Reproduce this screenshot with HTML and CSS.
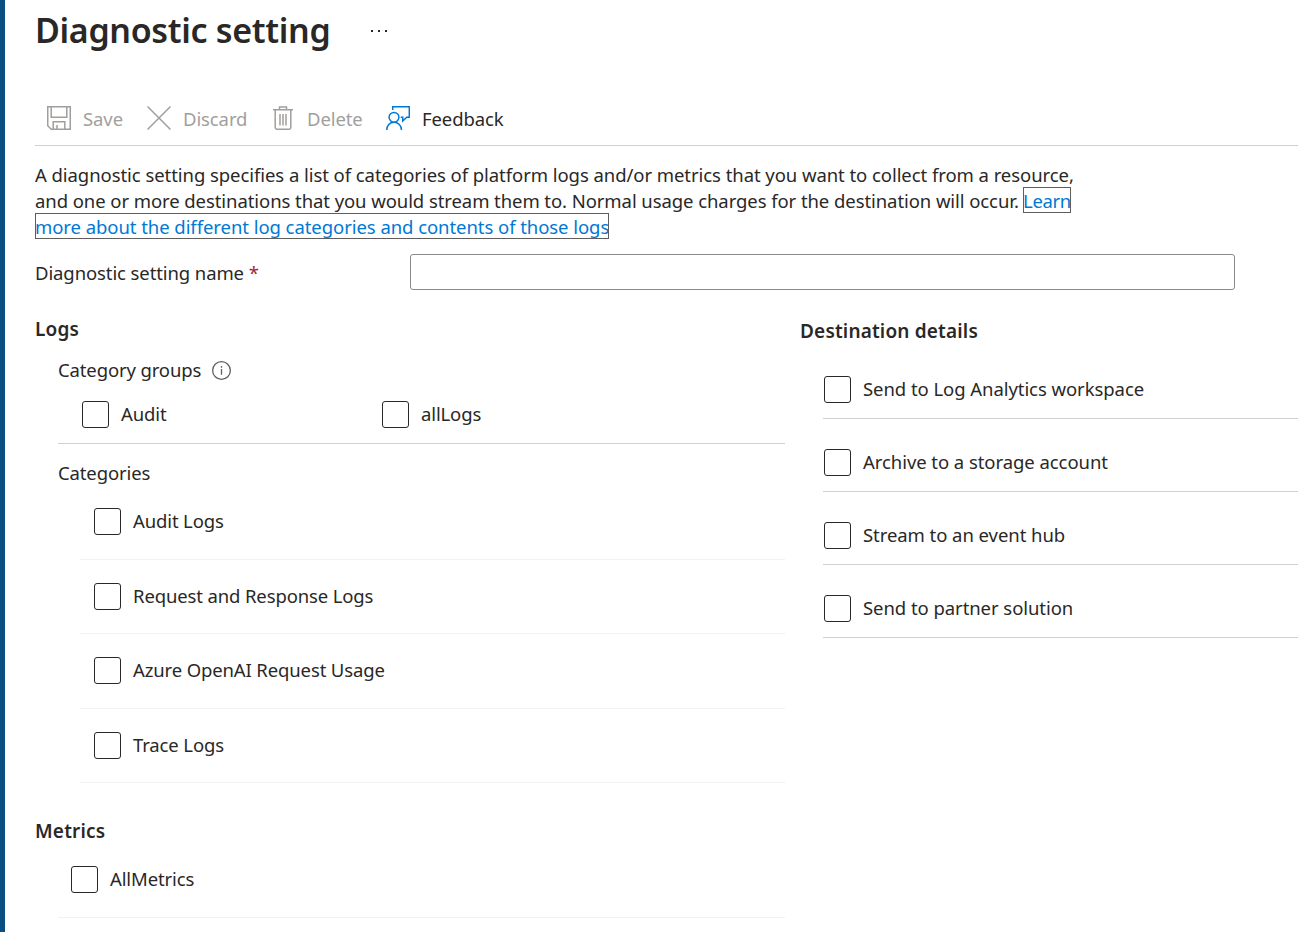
FILE: index.html
```
<!DOCTYPE html>
<html lang="en">
<head>
<meta charset="utf-8">
<title>Diagnostic setting</title>
<link rel="stylesheet" href="styles.css">
</head>
<body>
<main class="blade">
  <header class="header">
    <h1 class="title">Diagnostic setting</h1>
    <svg class="more" viewBox="0 0 18 4"><path d="M1 1h2v2H1zM8 1h2v2H8zM15 1h2v2h-2z"/></svg>
  </header>
  <nav class="toolbar">
    <button class="command save" disabled>
      <svg class="icon" viewBox="0 0 24 24"><path d="M.75.75h22.5v22.5H4.2L.75 19.8zM4.2.75v10.5h15.6V.75M6.2 23.25v-7.5h11.6v7.5M10 23.25V19"/></svg>
      <span>Save</span>
    </button>
    <button class="command discard" disabled>
      <svg class="icon" viewBox="0 0 24 24"><path d="M.5.5l23 23M23.500.5l-23 23"/></svg>
      <span>Discard</span>
    </button>
    <button class="command delete" disabled>
      <svg class="icon" viewBox="0 0 24 24"><path d="M2 3.700h20M8.500 3.500V1h7v2.500M4.200 4v17.500q0 1.700 1.700 1.700h12.200q1.700 0 1.700-1.700V4M9 8v11.500M12 8v11.500M15 8v11.500"/></svg>
      <span>Delete</span>
    </button>
    <button class="command feedback">
      <svg class="icon" viewBox="0 0 24 24"><path d="M6.700 4V.75h16.600v10.500h-2.500l-4.100 3.700v-3.700h-2"/><circle cx="8" cy="11.300" r="4.900"/><path d="M.75 24c0-4.500 3-7.800 7.250-7.800s7.500 3.300 7.500 7.800"/></svg>
      <span>Feedback</span>
    </button>
  </nav>
  <p class="intro"><span class="line-one">A diagnostic setting specifies a list of categories of platform logs and/or metrics that you want to collect from a resource,</span><br><span class="line-two">and one or more destinations that you would stream them to. Normal usage charges for the destination will occur.</span> <a class="link" href="#"><span class="learn">Learn</span><br><span class="line-three">more about the different log categories and contents of those logs</span></a></p>
  <div class="field">
    <label class="field-label" for="name">Diagnostic setting name <span class="required">*</span></label>
    <input class="field-input" id="name" type="text">
  </div>
  <div class="columns">
    <section class="sources">
      <h2 class="heading">Logs</h2>
      <div class="groups">
        <div class="subheading"><span>Category groups</span>
          <svg class="info" viewBox="0 0 18 18"><circle cx="9" cy="9" r="8.400"/><path d="M9 7.500v5.500M9 4.800v1.500"/></svg>
        </div>
        <div class="group-options">
          <label class="option"><input class="box" type="checkbox"><span>Audit</span></label>
          <label class="option"><input class="box" type="checkbox"><span>allLogs</span></label>
        </div>
      </div>
      <div class="subheading categories-title"><span>Categories</span></div>
      <div class="categories">
        <label class="option"><input class="box" type="checkbox"><span>Audit Logs</span></label>
        <label class="option"><input class="box" type="checkbox"><span>Request and Response Logs</span></label>
        <label class="option"><input class="box" type="checkbox"><span>Azure OpenAI Request Usage</span></label>
        <label class="option"><input class="box" type="checkbox"><span>Trace Logs</span></label>
      </div>
      <h2 class="heading metrics-title">Metrics</h2>
      <div class="metrics">
        <label class="option"><input class="box" type="checkbox"><span>AllMetrics</span></label>
      </div>
    </section>
    <section class="destinations">
      <h2 class="heading">Destination details</h2>
      <div class="destination-list">
        <label class="option"><input class="box" type="checkbox"><span>Send to Log Analytics workspace</span></label>
        <label class="option"><input class="box" type="checkbox"><span>Archive to a storage account</span></label>
        <label class="option"><input class="box" type="checkbox"><span>Stream to an event hub</span></label>
        <label class="option"><input class="box" type="checkbox"><span>Send to partner solution</span></label>
      </div>
    </section>
  </div>
</main>
</body>
</html>
```
FILE: styles.css
```
* { box-sizing: border-box; }
body {
  margin: 0;
  background: #fff;
  color: #292827;
  font-family: "Noto Sans", "Open Sans", sans-serif;
  font-size: 18.500px;
  line-height: 26px;
  letter-spacing: -0.06px;
}
.blade {
  height: 932px;
  overflow: hidden;
  border-left: 5px solid #0b4f82;
  padding-left: 30px;
}
.header { display: flex; height: 95px; }
.title { margin: 7px 0 0; width: 335px; font-size: 34px; line-height: 46px; font-weight: 600; letter-spacing: -0.33px; white-space: nowrap; }
.more { width: 18px; height: 4px; margin-top: 29px; fill: #292827; }
.toolbar { display: flex; height: 51px; padding-left: 12px; border-bottom: 1px solid #d2d0ce; }
.command {
  display: flex;
  align-items: center;
  gap: 12px;
  height: 46px;
  padding: 0;
  border: 0;
  background: none;
  font: inherit;
  letter-spacing: -0.1px;
  color: #292827;
  white-space: nowrap;
}
.command span { padding-top: 2px; }
.command:disabled { color: #a19f9d; }
.save { width: 100px; }
.discard { width: 124px; }
.delete { width: 115px; }
.icon { flex: none; width: 24px; height: 24px; fill: none; stroke: #a19f9d; stroke-width: 1.500; }
.feedback .icon { stroke: #0078d4; }
.intro { margin: 16px 0 0; white-space: nowrap; }
.line-two { letter-spacing: -0.075px; }
.link { color: #0078d4; text-decoration: none; }
.learn, .line-three { padding-top: 1px; outline: 1px solid #605e5c; outline-offset: -1px; }
.learn { margin-left: -0.500px; letter-spacing: -0.35px; }
.field { display: flex; margin-top: 14px; height: 36px; }
.field-label { width: 375px; padding-top: 6px; letter-spacing: -0.1px; }
.required { color: #a4262c; }
.field-input { width: 825px; height: 36px; border: 1px solid #8a8886; border-radius: 3px; background: #fff; }
.columns { display: flex; padding-top: 26px; }
.sources { width: 750px; margin-right: 15px; }
.heading { margin: 0; font-size: 19px; line-height: 26px; font-weight: 600; letter-spacing: 0.18px; }
.groups { margin-left: 23px; padding-top: 15px; height: 102px; border-bottom: 1px solid #d2d0ce; }
.subheading { display: flex; align-items: center; gap: 11px; letter-spacing: -0.13px; }
.info { width: 19px; height: 19px; fill: none; stroke: #605e5c; stroke-width: 1.200; }
.group-options { display: flex; padding: 18px 0 0 24px; }
.group-options .option { width: 300px; }
.option { display: flex; align-items: center; gap: 12px; height: 27px; white-space: nowrap; }
.sources .option { letter-spacing: -0.13px; }
.group-options span { padding-bottom: 2px; }
.categories .option span { padding-bottom: 1px; }
.box { appearance: none; flex: none; width: 27px; height: 27px; margin: 0; border: 1px solid #292827; border-radius: 3px; background: #fff; }
.categories-title { margin: 16px 0 -1px 23px; }
.categories { margin-left: 45px; }
.categories .option { height: 74.500px; padding-left: 14px; border-bottom: 1px solid #f3f2f1; }
.metrics-title { margin-top: 35px; }
.metrics { margin: -1px 0 0 23px; }
.metrics .option { height: 75px; padding: 0 0 2px 13px; border-bottom: 1px solid #f3f2f1; }
.destinations { flex: 1; padding-top: 2px; }
.destination-list { margin: 2px 0 0 23px; }
.destination-list .option { height: 73px; padding: 14px 0 0 1px; border-bottom: 1px solid #d2d0ce; }
```
